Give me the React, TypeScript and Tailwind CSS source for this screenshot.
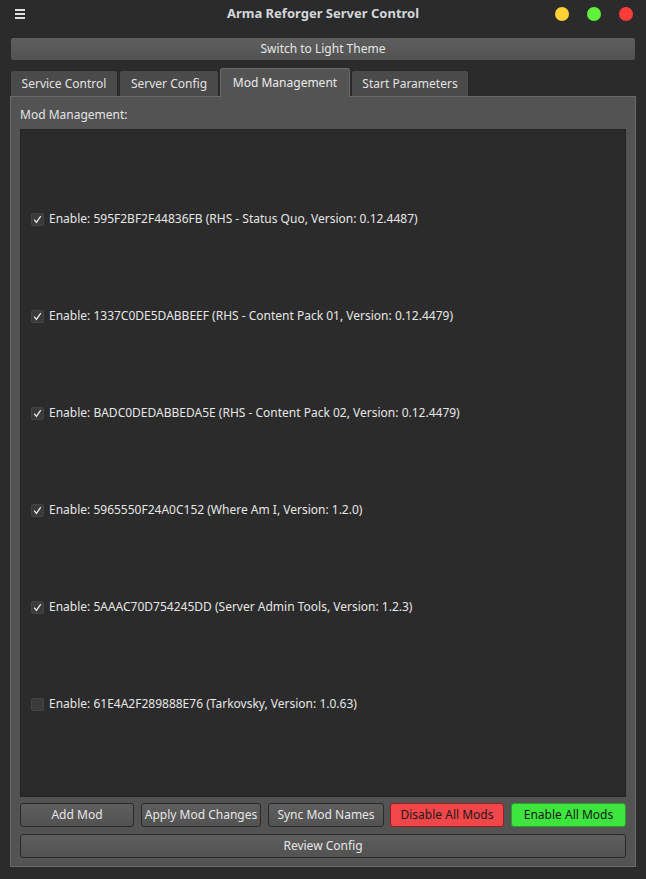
import React, { useState } from "react";

type Mod = { id: string; name: string; version: string; enabled: boolean };

const initialMods: Mod[] = [
  { id: "595F2BF2F44836FB", name: "RHS - Status Quo", version: "0.12.4487", enabled: true },
  { id: "1337C0DE5DABBEEF", name: "RHS - Content Pack 01", version: "0.12.4479", enabled: true },
  { id: "BADC0DEDABBEDA5E", name: "RHS - Content Pack 02", version: "0.12.4479", enabled: true },
  { id: "5965550F24A0C152", name: "Where Am I", version: "1.2.0", enabled: true },
  { id: "5AAAC70D754245DD", name: "Server Admin Tools", version: "1.2.3", enabled: true },
  { id: "61E4A2F289888E76", name: "Tarkovsky", version: "1.0.63", enabled: false },
];

const tabs = [
  { label: "Service Control", w: "w-[108px]" },
  { label: "Server Config", w: "w-[100px]" },
  { label: "Mod Management", w: "w-[130px]" },
  { label: "Start Parameters", w: "w-[118px]" },
];

const btn =
  "h-[24px] rounded-[3px] border border-[#2a2a2a] bg-gradient-to-b from-[#5e5e5e] to-[#525252] text-[#e6e6e6] text-[12px] leading-none flex items-center justify-center whitespace-nowrap";

const App: React.FC = () => {
  const [mods, setMods] = useState(initialMods);
  const [active, setActive] = useState(2);

  const toggle = (i: number) =>
    setMods((m) => m.map((x, j) => (j === i ? { ...x, enabled: !x.enabled } : x)));

  return (
    <div
      className="w-[646px] h-[879px] bg-[#2b2b2b] text-[#e6e6e6] overflow-hidden flex flex-col"
      style={{ fontFamily: '"Noto Sans", sans-serif' }}
    >
      {/* title bar */}
      <div className="h-[28px] flex items-center pl-[15px] pr-[13px]">
        <div className="flex flex-col gap-[2px] w-[10px]">
          <span className="h-[2px] bg-[#e0e0e0]" />
          <span className="h-[2px] bg-[#e0e0e0]" />
          <span className="h-[2px] bg-[#e0e0e0]" />
        </div>
        {/* padding balances the dots so the title sits in the window centre */}
        <div className="flex-1 text-center text-[13px] font-bold text-[#d4d6dc] pl-[66px]">
          Arma Reforger Server Control
        </div>
        <div className="flex items-center gap-[18px]">
          <span className="w-[14px] h-[14px] rounded-full bg-[#fdd237]" />
          <span className="w-[14px] h-[14px] rounded-full bg-[#5ef33a]" />
          <span className="w-[14px] h-[14px] rounded-full bg-[#fd3c3c]" />
        </div>
      </div>

      <div className="px-[10px] pt-[9px] flex flex-col flex-1">
        <button className={btn + " w-full h-[23px]"}>Switch to Light Theme</button>

        {/* tabs */}
        <div className="flex items-end mt-[7px] h-[28px] gap-[1px] relative z-10">
          {tabs.map((t, i) => (
            <button
              key={t.label}
              onClick={() => setActive(i)}
              className={
                t.w +
                (i === active
                  ? " h-[29px] -mb-[1px] rounded-t-[3px] border border-b-0 border-[#6a6a6a] bg-[#535353] text-[12px] text-[#ececec]"
                  : " h-[26px] rounded-t-[3px] border border-b-0 border-[#2a2a2a] bg-[#4a4a4a] text-[12px] text-[#e2e2e2]")
              }
            >
              {t.label}
            </button>
          ))}
        </div>

        {/* panel */}
        <div className="flex-1 mb-[12px] border border-[#6a6a6a] bg-[#535353] px-[9px] pt-[8px] pb-[8px] flex flex-col">
          <div className="text-[12px] text-[#e4e4e4] h-[19px] leading-[19px]">Mod Management:</div>
          <div className="mt-[5px] flex-1 bg-[#2b2b2b] border border-[#232323] flex flex-col pt-[77px] pl-[10px]">
            {mods.map((m, i) => (
              <label
                key={m.id}
                className="flex items-center h-[24px] mb-[73px] cursor-pointer"
                onClick={() => toggle(i)}
              >
                <span className="w-[13px] h-[13px] rounded-[2px] bg-[#3a3a3a] border border-[#444] flex items-center justify-center">
                  {m.enabled && (
                    <svg width="9" height="9" viewBox="0 0 9 9">
                      <path d="M1.2 4.6 L3.4 7.4 L7.8 1.2" fill="none" stroke="#e8e8e8" strokeWidth="1.3" />
                    </svg>
                  )}
                </span>
                <span className="ml-[5px] text-[12px] text-[#e6e6e6]">
                  Enable: {m.id} ({m.name}, Version: {m.version})
                </span>
              </label>
            ))}
          </div>

          <div className="flex mt-[6px]">
            <button className={btn + " w-[114px]"}>Add Mod</button>
            <button className={btn + " w-[120px] ml-[7px]"}>Apply Mod Changes</button>
            <button className={btn + " w-[116px] ml-[7px]"}>Sync Mod Names</button>
            <button className="w-[114px] ml-[6px] h-[24px] rounded-[3px] border border-[#9a1c1c] bg-[#f2474a] text-[#1a1a1a] text-[12px] leading-none whitespace-nowrap">
              Disable All Mods
            </button>
            <button className="flex-1 ml-[7px] h-[24px] rounded-[3px] border border-[#28a028] bg-[#3ee53e] text-[#1a1a1a] text-[12px] leading-none whitespace-nowrap">
              Enable All Mods
            </button>
          </div>
          <button className={btn + " w-full mt-[7px]"}>Review Config</button>
        </div>
      </div>
    </div>
  );
};

export default App;
